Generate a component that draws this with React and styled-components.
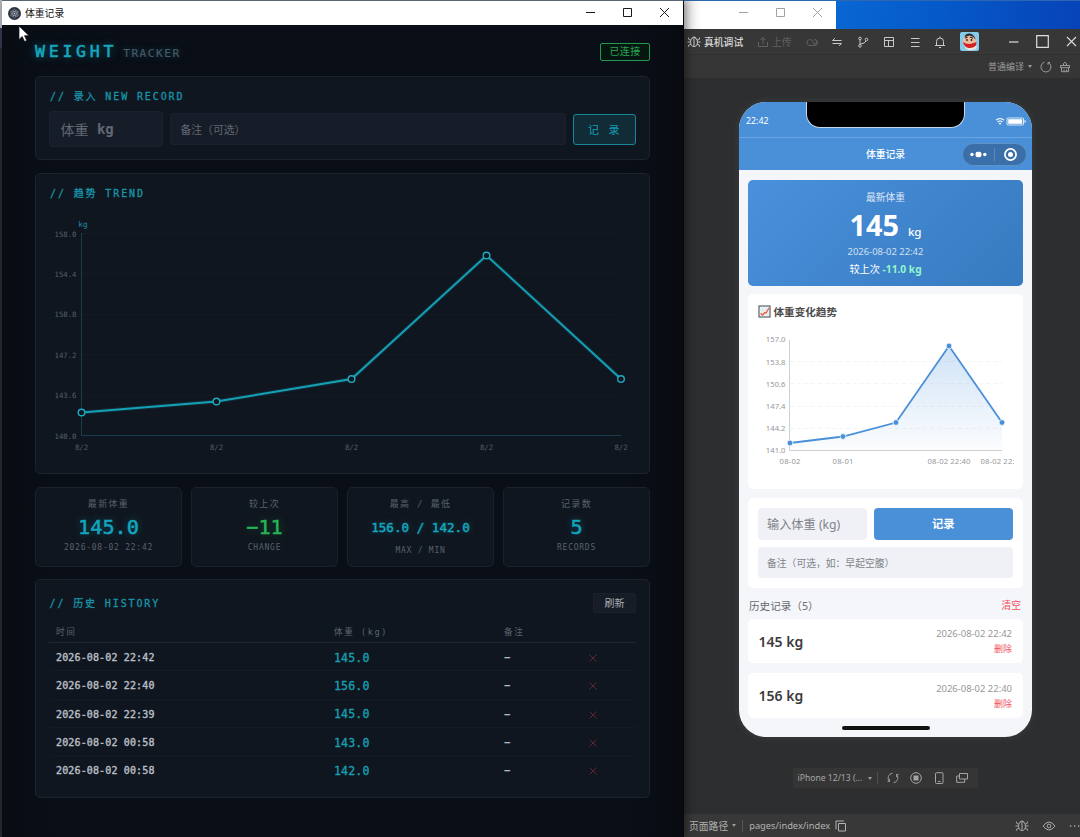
import React from "react";
import styled, { createGlobalStyle, css } from "styled-components";

const mono = `"DejaVu Sans Mono", "Noto Sans CJK SC", monospace`;
const sans = `"Noto Sans", "Noto Sans CJK SC", sans-serif`;

const GlobalStyle = createGlobalStyle`
  * { box-sizing: border-box; }
  body { margin: 0; overflow: hidden; background: #2d2e2f; }
  button, table { font: inherit; }
`;

const Desktop = styled.div`
  display: grid;
  grid-template-columns: 2px 682px 396px;
  width: 1080px;
  height: 837px;
  overflow: hidden;
  font-family: ${sans};
  background: #2d2e2f;
`;

const LeftEdge = styled.div`
  background: linear-gradient(#b9bcc4 0 28px, #39395a 28px 48px, #2a2c30 48px);
`;

/* ---------- tracker window ---------- */

const TrackerWindow = styled.section`
  position: relative;
  z-index: 1;
  display: flex;
  flex-direction: column;
  height: 837px;
  border-top: 1px solid #5d6474;
  border-right: 1px solid #05070b;
  background: linear-gradient(90deg, #080d14, #0a0e16 8%, #0a0e16 92%, #080b12);
  box-shadow: 2px 0 9px rgba(0, 0, 0, 0.45);
  font-family: ${mono};
`;

const TitleBar = styled.header`
  display: flex;
  align-items: center;
  height: 24px;
  flex: none;
  padding-left: 6px;
  background: #fff;
  color: #111;
  font-family: ${sans};
  font-size: 9.8px;
`;

const TitleText = styled.span`
  flex: 1;
  margin-left: 4px;
`;

const WindowButtons = styled.div`
  display: flex;
  width: 111px;
  height: 24px;
  color: ${(p) => (p.$dim ? "#a2a2a2" : "#1a1a1a")};
  svg { flex: 1; height: 24px; }
`;

const Cursor = styled.svg`
  position: absolute;
  left: 16px;
  top: 24px;
`;

const TrackerBody = styled.main`
  display: flex;
  flex-direction: column;
  padding: 0 33px 0 33px;
`;

const BrandRow = styled.div`
  display: flex;
  align-items: center;
  justify-content: space-between;
  height: 51px;
  padding-top: 3px;
`;

const Brand = styled.div`
  display: flex;
  align-items: baseline;
  padding-top: 2px;
  color: #17a5bd;
  font-size: 16.6px;
  letter-spacing: 3.7px;
  line-height: 20px;
  -webkit-text-stroke: 0.6px #17a5bd;
  text-shadow: 0 0 8px rgba(0, 190, 220, 0.55);
`;

const BrandSub = styled.span`
  margin-left: 6px;
  color: #4b5864;
  font-size: 11px;
  letter-spacing: 1.6px;
  -webkit-text-stroke: 0.2px #4b5864;
  text-shadow: 0 0 7px rgba(0, 190, 220, 0.35);
`;

const StatusBadge = styled.div`
  width: 50px;
  height: 18px;
  border: 1px solid #23994e;
  border-radius: 2px;
  background: #04160f;
  color: #27a653;
  font-size: 10px;
  line-height: 16px;
  letter-spacing: 0.4px;
  text-align: center;
`;

const Panel = styled.section`
  height: ${(p) => p.$h}px;
  margin-bottom: 13px;
  padding: 0 13px;
  border: 1px solid #1c232d;
  border-radius: 5px;
  background: #10161f;
`;

const PanelTitle = styled.h2`
  margin: 0;
  color: #1794a8;
  font-size: 10px;
  font-weight: 400;
  letter-spacing: 1.88px;
  line-height: 14px;
  padding: ${(p) => p.$top || 0}px 0 0 ${(p) => (p.$top ? 1 : 0.5)}px;
  -webkit-text-stroke: 0.3px #1794a8;
`;

const EntryRow = styled.div`
  display: flex;
  align-items: center;
  gap: 7px;
  height: 36px;
  margin-top: 7px;
`;

const Field = styled.div`
  display: flex;
  align-items: center;
  width: ${(p) => (p.$wide ? "auto" : "114px")};
  flex: ${(p) => (p.$wide ? 1 : "none")};
  height: ${(p) => (p.$wide ? 32 : 36)}px;
  padding: 0 0 0 ${(p) => (p.$wide ? 9.5 : 10.5)}px;
  border: 1px solid #1b212d;
  border-radius: 3px;
  background: #171d28;
  color: #616873;
  font-size: ${(p) => (p.$wide ? 10.8 : 14)}px;
  white-space: pre;
  b { font-weight: 700; }
`;

const RecordButton = styled.button`
  width: 63px;
  height: 31px;
  padding: 0;
  border: 1px solid #178799;
  border-radius: 3px;
  background: #112c37;
  color: #139db2;
  font-size: 11px;
  letter-spacing: 1.4px;
`;

const TrendSvg = styled.svg`
  display: block;
  margin: 4.5px 0 0 0;
  font-family: ${mono};
`;

const StatGrid = styled.div`
  display: grid;
  grid-template-columns: repeat(4, 1fr);
  gap: 9px;
  margin-bottom: 12px;
`;

const StatCard = styled.div`
  display: flex;
  flex-direction: column;
  align-items: center;
  height: 80px;
  padding-top: 10px;
  border: 1px solid #1a212b;
  border-radius: 5px;
  background: #10161f;
  white-space: pre;
`;

const StatLabel = styled.div`
  color: #59616c;
  font-size: 9px;
  letter-spacing: 1.35px;
  line-height: 13px;
`;

const StatValue = styled.div`
  color: ${(p) => (p.$green ? "#27b457" : "#14a5be")};
  font-size: ${(p) => (p.$small ? 12.6 : 20.2)}px;
  line-height: ${(p) => (p.$small ? 30 : 27)}px;
  margin-top: ${(p) => (p.$small ? 2 : 3)}px;
  -webkit-text-stroke: 0.5px currentColor;
  text-shadow: 0 0 8px ${(p) => (p.$green ? "rgba(30,190,80,.4)" : "rgba(0,190,220,.4)")};
`;

const StatHint = styled.div`
  color: #58616c;
  font-size: 8px;
  letter-spacing: 0.75px;
  line-height: 12px;
  padding-top: ${(p) => (p.$low ? 2 : 1)}px;
`;

const HistoryHead = styled.div`
  display: flex;
  align-items: center;
  justify-content: space-between;
  height: 20px;
  margin-top: 13px;
  ${PanelTitle} { padding-top: 1px; }
`;

const RefreshButton = styled.button`
  width: 43px;
  height: 20px;
  padding: 0 0 2px;
  border: 1px solid #1b212c;
  border-radius: 2px;
  background: #171c26;
  color: #a9aeb6;
  font-size: 10px;
`;

const HistoryRow = styled.div`
  display: grid;
  grid-template-columns: 278px 170px 84px 1fr;
  align-items: center;
  height: 28.3px;
  padding: 2px 0 0 7px;
  border-bottom: 1px solid #151b24;
  color: #b8bdc4;
  font-size: 10px;
  letter-spacing: 0.14px;
  svg { margin-top: -1px; }
  &:last-child { border-bottom-color: transparent; }
  ${(p) =>
    p.$head &&
    css`
      height: 20px;
      margin-top: 10px;
      padding: 0 0 3px 7px;
      border-bottom-color: #1f2731;
      color: #5b646f;
      font-size: 8.6px;
      letter-spacing: 1.55px;
    `}
`;

const DateCell = styled.span`
  -webkit-text-stroke: 0.4px currentColor;
`;

const WeightCell = styled.span`
  color: #16a0b4;
  font-size: 11.6px;
  -webkit-text-stroke: 0.3px currentColor;
`;

/* ---------- developer tools side ---------- */

const RightSide = styled.div`
  display: flex;
  flex-direction: column;
  height: 837px;
  min-width: 0;
`;

const Wallpaper = styled.div`
  display: flex;
  height: 29px;
  flex: none;
  border-top: 1px solid #2d67ad;
  background: linear-gradient(100deg, #0a6bd6 30%, #0559c9 65%, #0743b8);
`;

const BackWindow = styled.div`
  display: flex;
  justify-content: flex-end;
  width: 152px;
  background: linear-gradient(90deg, #e4e4e4, #fff 12%);
`;

const DevTools = styled.section`
  display: flex;
  flex-direction: column;
  flex: 1;
  background: #2d2e2f;
`;

const ToolBar = styled.div`
  display: grid;
  grid-template-columns: 20px 51px 15px 30px 24px 26px 26px 26px 25px 26px 32px 14px 29px 29px 29px;
  align-items: center;
  height: 26px;
  border-bottom: 1px solid #313131;
  background: #373737;
  color: #c9c9c9;
  font-size: 9.8px;
  white-space: nowrap;
  > svg { justify-self: center; }
`;

const ToolText = styled.span`
  color: ${(p) => (p.$dim ? "#626262" : "#dadada")};
  font-weight: ${(p) => (p.$dim ? 400 : 500)};
  ${(p) => p.$dim && "padding-left: 2px;"}
`;

const CompileBar = styled.div`
  display: flex;
  align-items: center;
  justify-content: flex-end;
  height: 23px;
  padding-right: 9px;
  background: #363636;
  color: #9c9c9c;
  font-size: 9px;
  svg { margin-left: 7.5px; }
`;

const Caret = styled.i`
  display: inline-block;
  margin-left: 4px;
  border: 2px solid transparent;
  border-top: 3px solid #999;
  border-bottom: 0;
`;

const Simulator = styled.div`
  display: flex;
  flex-direction: column;
  align-items: center;
  flex: 1;
  padding-top: 24px;
`;

const Phone = styled.div`
  position: relative;
  width: 293px;
  height: 635px;
  margin-left: 7px;
  flex: none;
  overflow: hidden;
  border-radius: 27px;
  background: #f4f6fa;
  color: #444;
  box-shadow: 0 0 8px rgba(255, 255, 255, 0.08);
`;

const PhoneStatus = styled.div`
  display: flex;
  justify-content: space-between;
  height: 36px;
  padding: 12px 6px 0 7px;
  background: #4990d9;
  border-bottom: 1px solid #68a5e2;
  color: #fff;
  font-size: 8.8px;
  line-height: 14px;
`;

const Notch = styled.div`
  position: absolute;
  left: 67px;
  top: -1px;
  width: 159px;
  height: 27px;
  border: 1px solid #c6d8ec;
  border-radius: 0 0 14px 14px;
  background: #000;
  border-top: 0;
`;

const NavBar = styled.div`
  display: grid;
  grid-template-columns: 70px 1fr 70px;
  align-items: center;
  height: 32px;
  background: #4990d9;
  color: #fff;
  font-size: 9.8px;
  font-weight: 500;
  text-align: center;
`;

const Capsule = styled.div`
  display: flex;
  width: 65px;
  height: 23px;
  margin-left: -0.5px;
  border: 1px solid #5e92c8;
  border-radius: 12px;
  background: #3b6fa9;
`;

const PhonePage = styled.div`
  display: flex;
  flex-direction: column;
  padding: 10px 9px 0;
`;

const Hero = styled.div`
  display: flex;
  flex-direction: column;
  align-items: center;
  height: 106px;
  margin-bottom: 8px;
  padding-top: 11px;
  border-radius: 5px;
  background: linear-gradient(135deg, #4a90dc, #367bbf);
  color: #fff;
`;

const HeroLine = styled.div`
  font-size: ${(p) => p.$size}px;
  line-height: ${(p) => p.$lh}px;
  opacity: ${(p) => p.$fade || 1};
  b { color: #92f6cb; }
`;

const HeroValue = styled.div`
  display: flex;
  align-items: baseline;
  margin-top: 4px;
  height: 31px;
  font-size: 28.8px;
  font-weight: 700;
  line-height: 32px;
  span { margin-left: 9px; font-size: 11.6px; font-weight: 500; }
`;

const WhiteCard = styled.div`
  height: ${(p) => p.$h}px;
  margin-bottom: ${(p) => p.$mb || 9}px;
  padding: 10px;
  border-radius: 5px;
  background: #fff;
`;

const ChartTitle = styled.div`
  display: flex;
  align-items: center;
  gap: 3px;
  height: 15px;
  margin-left: -0.5px;
  font-size: 10.6px;
  font-weight: 700;
  color: #4c4c4c;
`;

const PhoneSvg = styled.svg`
  display: block;
  margin-top: 11px;
  font-family: ${sans};
`;

const FormGrid = styled.div`
  display: grid;
  grid-template-columns: 109px 138.5px;
  grid-template-rows: 32px 31px;
  gap: 7px;
`;

const PhoneField = styled.div`
  display: flex;
  align-items: center;
  padding-left: 9px;
  border-radius: 4px;
  background: #f0f1f6;
  color: #808388;
  font-size: ${(p) => (p.$full ? 9.8 : 12.2)}px;
  ${(p) => p.$full && "grid-column: 1 / 3;"}
`;

const PhoneButton = styled.button`
  padding: 0 0 3px;
  border: 0;
  border-radius: 4px;
  background: #4990d9;
  color: #fff;
  font-size: 11.3px;
  font-weight: 700;
`;

const ListHead = styled.div`
  display: flex;
  align-items: center;
  justify-content: space-between;
  height: 22px;
  margin: -3px 0 3px;
  padding: 0 2px 0 1px;
  font-size: 10.6px;
  color: #66696e;
`;

const Danger = styled.span`
  color: #f0525b;
  font-size: ${(p) => p.$size || 9}px;
`;

const RecordItem = styled(WhiteCard)`
  display: flex;
  align-items: center;
  justify-content: space-between;
  padding: 0 11px 0 10.5px;
  strong { font-size: 14px; font-weight: 600; color: #3b3b3b; }
`;

const RecordMeta = styled.div`
  display: flex;
  flex-direction: column;
  align-items: flex-end;
  color: #94979b;
  font-size: 9.45px;
  line-height: 15px;
`;

const HomeBar = styled.div`
  position: absolute;
  left: 103px;
  bottom: 7px;
  width: 88px;
  height: 4px;
  border-radius: 2px;
  background: #111;
`;

const DeviceBar = styled.div`
  display: grid;
  grid-template-columns: 69px 11px 31px 15px 30px 17px;
  align-items: center;
  width: 185px;
  height: 20px;
  margin: 31px 0 0 6px;
  padding-left: 5px;
  background: #353535;
  color: #a5a5a5;
  font-size: 8.6px;
  white-space: nowrap;
  svg { justify-self: center; }
`;

const CaretCell = styled.span`
  display: flex;
  align-items: center;
  height: 12px;
  border-right: 1px solid #505050;
  i { margin-left: 1px; }
`;

const FooterBar = styled.footer`
  display: flex;
  align-items: center;
  height: 23px;
  padding: 0 0 0 5px;
  background: #383838;
  color: #b3b3b3;
  font-size: 9.8px;
  white-space: nowrap;
`;

const FooterPath = styled.span`
  margin-left: 6px;
  padding-left: 6px;
  border-left: 1px solid #555;
  font-size: 9.3px;
  line-height: 12px;
  margin-right: 5px;
`;

const Spacer = styled.span`flex: 1;`;

const FooterIcons = styled.div`
  display: flex;
  align-items: center;
  gap: 13px;
`;

/* ---------- drawings ---------- */

const Line = ({ size = 12, children, w = 1, color = "currentColor", width }) => (
  <svg width={width || size} height={size} viewBox={`0 0 ${width || size} ${size}`} fill="none" stroke={color} strokeWidth={w}>
    {children}
  </svg>
);

const WinIcons = ({ dim }) => (
  <WindowButtons $dim={dim}>
    <svg viewBox="0 0 37 24" fill="none" stroke="currentColor"><path d="M14 11.5h9" /></svg>
    <svg viewBox="0 0 37 24" fill="none" stroke="currentColor"><path d="M14.5 7.5h8v8h-8z" /></svg>
    <svg viewBox="0 0 37 24" fill="none" stroke="currentColor"><path d="M14 7l9 9M23 7l-9 9" /></svg>
  </WindowButtons>
);

const AppLogo = () => (
  <svg width="13" height="13" viewBox="0 0 13 13" fill="none">
    <circle cx="6.5" cy="6.5" r="6.5" fill="#2d3340" />
    <g stroke="#a5b0bc" strokeWidth=".55">
      <ellipse cx="6.5" cy="6.5" rx="4.3" ry="1.7" transform="rotate(30 6.5 6.5)" />
      <ellipse cx="6.5" cy="6.5" rx="4.3" ry="1.7" transform="rotate(90 6.5 6.5)" />
      <ellipse cx="6.5" cy="6.5" rx="4.3" ry="1.7" transform="rotate(150 6.5 6.5)" />
    </g>
    <circle cx="6.5" cy="6.5" r=".7" fill="#cdd5dc" />
  </svg>
);

const BugIcon = ({ color }) => (
  <Line size={13} width={14} color={color}>
    <ellipse cx="7" cy="7.2" rx="3.4" ry="4.3" />
    <path d="M4.600 3.300Q7 .300 9.400 3.300M7 4v7.500M3.600 7H.500M13.500 7h-3.100M3.800 5.300L1.600 4.200V2.600M10.200 5.300l2.200-1.100V2.600M4 9.200l-2.400 1V11.800M10 9.200l2.400 1V11.800" />
  </Line>
);

const RotateIcon = () => (
  <Line color="#999">
    <path d="M5.500 1.200A4.900 4.900 0 0 0 2.500 9.500M2.500 9.500V7M2.500 9.500H.500M6.500 10.800A4.900 4.900 0 0 0 9.500 2.500M9.500 2.500V5M9.500 2.500h2" />
  </Line>
);

const Avatar = () => (
  <svg width="19" height="19" viewBox="0 0 19 19">
    <rect width="19" height="19" rx="2" fill="#86cbea" />
    <path d="M4 13c1-1 11-1 13 1l-1 3q-6 2.500-10 0z" fill="#e8e5df" />
    <path d="M3.500 7Q4 3 9 3q6 0 7 6c.6 4-4 5-8 4.500Q3 13 2.600 10z" fill="#edbb9b" />
    <path d="M4.500 5Q5 1.500 9.500 1.500q5 .5 6 6.500L13.500 5 10 3.500z" fill="#302a2b" />
    <path d="M5 6l2.500-.8M10 5l3 1.200" stroke="#292324" strokeWidth="1.200" />
    <circle cx="7" cy="8" r=".9" fill="#292324" /><circle cx="11.500" cy="8" r=".9" fill="#292324" />
    <path d="M3 10q4 3 9 1.500l4.500-1.500-.5 3.500q-3 3-7.500 2.500-4.500-1-5.500-6z" fill="#d52125" />
  </svg>
);

const CursorArrow = () => (
  <Cursor width="12" height="18" viewBox="0 0 12 18">
    <path d="M1 1v13.500l3.200-3 2.400 5 2.200-1-2.300-4.800H11z" fill="#fff" stroke="#111" strokeWidth=".7" />
  </Cursor>
);

/* ---------- charts ---------- */

const trendPoints = [[32.5, 206.5], [167.5, 195.5], [302.5, 173], [437.5, 49.5], [572, 173]];
const trendTicks = ["158.0", "154.4", "150.8", "147.2", "143.6", "140.0"];

const TrendChart = () => (
  <TrendSvg width="587" height="260" viewBox="0 0 587 260">
    <g fill="#55606b" fontSize="7.300" textAnchor="end">
      {trendTicks.map((t, i) => <text key={t} x="27.500" y={30.5 + i * 40.4}>{t}</text>)}
    </g>
    <text x="34" y="20.500" fill="#168fa3" fontSize="7.800" textAnchor="middle">kg</text>
    <g stroke="#141922">
      {[0, 1, 2, 3, 4].map((i) => <path key={i} d={`M33 ${27.5 + Math.round(i * 40.4)}H572`} />)}
    </g>
    <path d="M32.500 27v202.500H572" fill="none" stroke="#163e4b" />
    <polyline points={trendPoints.join(" ")} fill="none" stroke="#0d4350" strokeWidth="4" opacity=".5" />
    <polyline points={trendPoints.join(" ")} fill="none" stroke="#16a0b7" strokeWidth="1.900" />
    {trendPoints.map(([x, y]) => (
      <g key={x}>
        <circle cx={x} cy={y} r="3.300" fill="#10161f" stroke="#1eabc2" strokeWidth="1.400" />
        <text x={x} y="243.800" fill="#55606b" fontSize="7.300" textAnchor="middle">8/2</text>
      </g>
    ))}
  </TrendSvg>
);

const phonePoints = [[32, 113], [85, 106.5], [138, 92.5], [191, 16], [244, 92.5]];
const phoneTicks = ["157.0", "153.8", "150.6", "147.4", "144.2", "141.0"];
const phoneDates = [[32, "08-02"], [85, "08-01"], [191, "08-02 22:40"]];

const PhoneChart = () => (
  <PhoneSvg width="256" height="150" viewBox="0 0 256 150">
    <defs>
      <linearGradient id="area" x1="0" y1="0" x2="0" y2="1">
        <stop offset="0" stopColor="#4990d9" stopOpacity=".26" />
        <stop offset="1" stopColor="#4990d9" stopOpacity=".02" />
      </linearGradient>
    </defs>
    <g stroke="#f4f5f6" strokeDasharray="4 3">
      {[1, 2, 3, 4].map((i) => <path key={i} d={`M32 ${9.5 + Math.round(i * 22.2)}H244`} />)}
    </g>
    <path d="M31.500 10v110.500H244" fill="none" stroke="#cfd0d2" />
    <polygon points={`32,120 ${phonePoints.join(" ")} 244,120`} fill="url(#area)" />
    <polyline points={phonePoints.join(" ")} fill="none" stroke="#4990d9" strokeWidth="1.800" />
    {phonePoints.map(([x, y]) => <circle key={x} cx={x} cy={y} r="2.900" fill="#4990d9" stroke="#fff" strokeWidth=".8" />)}
    <g fill="#96989b" fontSize="7.700">
      {phoneTicks.map((t, i) => <text key={t} x="27.500" y={12.3 + i * 22.2} textAnchor="end">{t}</text>)}
    </g>
    <g fill="#96989b" fontSize="7.700" textAnchor="middle">
      {phoneDates.map(([x, t]) => <text key={x} x={x} y="134" textLength={t.length > 5 ? 43 : 21}>{t}</text>)}
      <text x="222.500" y="134" textAnchor="start" textLength="34">08-02 22:</text>
    </g>
  </PhoneSvg>
);

const TrendEmoji = () => (
  <svg width="13" height="13" viewBox="0 0 13 13" fill="none">
    <rect x="1" y="1" width="11" height="11" fill="#eef2f4" stroke="#5c6266" strokeWidth="1.200" />
    <path d="M4.500 1.500v10M8 1.500v10M1.500 5h10M1.500 8.500h10" stroke="#d5dde2" strokeWidth=".6" />
    <path d="M2.500 8.500l2.200 1.500 2-2.500 1.300.5L11 3" stroke="#e8603f" strokeWidth="1.300" />
  </svg>
);

/* ---------- data ---------- */

const stats = [
  { label: "最新体重", value: "145.0", hint: "2026-08-02 22:42" },
  { label: "较上次", value: "−11", hint: "CHANGE", green: true },
  { label: "最高 / 最低", value: "156.0 / 142.0", hint: "MAX / MIN", small: true },
  { label: "记录数", value: "5", hint: "RECORDS" },
];

const history = [
  ["2026-08-02 22:42", "145.0"],
  ["2026-08-02 22:40", "156.0"],
  ["2026-08-02 22:39", "145.0"],
  ["2026-08-02 00:58", "143.0"],
  ["2026-08-02 00:58", "142.0"],
];

const Tracker = () => (
  <TrackerWindow>
    <TitleBar>
      <AppLogo />
      <TitleText>体重记录</TitleText>
      <WinIcons />
    </TitleBar>
    <CursorArrow />
    <TrackerBody>
      <BrandRow>
        <Brand>WEIGHT<BrandSub>TRACKER</BrandSub></Brand>
        <StatusBadge>已连接</StatusBadge>
      </BrandRow>
      <Panel $h={84}>
        <PanelTitle $top={13}>// 录入 NEW RECORD</PanelTitle>
        <EntryRow>
          <Field>体重 <b>kg</b></Field>
          <Field $wide>备注（可选）</Field>
          <RecordButton>记 录</RecordButton>
        </EntryRow>
      </Panel>
      <Panel $h={301}>
        <PanelTitle $top={13}>// 趋势 TREND</PanelTitle>
        <TrendChart />
      </Panel>
      <StatGrid>
        {stats.map((s) => (
          <StatCard key={s.label}>
            <StatLabel>{s.label}</StatLabel>
            <StatValue $green={s.green} $small={s.small}>{s.value}</StatValue>
            <StatHint $low={s.small}>{s.hint}</StatHint>
          </StatCard>
        ))}
      </StatGrid>
      <Panel $h={219}>
        <HistoryHead>
          <PanelTitle>// 历史 HISTORY</PanelTitle>
          <RefreshButton>刷新</RefreshButton>
        </HistoryHead>
        <HistoryRow $head><span>时间</span><span>体重 (kg)</span><span>备注</span></HistoryRow>
        {history.map(([date, weight], i) => (
          <HistoryRow key={i}>
            <DateCell>{date}</DateCell>
            <WeightCell>{weight}</WeightCell>
            <DateCell>−</DateCell>
            <Line size={10} w={0.9} color="#6e2835"><path d="M1.500 2.500l7 7M8.500 2.500l-7 7" /></Line>
          </HistoryRow>
        ))}
      </Panel>
    </TrackerBody>
  </TrackerWindow>
);

const PhoneScreen = () => (
  <Phone>
    <PhoneStatus>
      <span>22:42</span>
      <svg width="31" height="14" viewBox="0 0 31 14" fill="none" stroke="#fff">
        <path d="M1 6.200q4-3.400 8 0M2.600 8q2.400-2 4.800 0" strokeWidth="1.100" />
        <circle cx="5" cy="9.600" r=".6" fill="#fff" />
        <rect x="12" y="4" width="16.500" height="7" rx="1" strokeWidth=".8" />
        <rect x="13.200" y="5.200" width="14" height="4.600" fill="#fff" stroke="none" />
        <path d="M30 6.200v2.600" />
      </svg>
    </PhoneStatus>
    <Notch />
    <NavBar>
      <span />
      <span>体重记录</span>
      <Capsule>
        <svg width="63" height="21" viewBox="0 0 63 21" fill="#fff">
          <circle cx="9" cy="10.500" r="1.700" /><rect x="12.500" y="7.800" width="6" height="5.400" rx="2.300" /><circle cx="21.800" cy="10.500" r="1.700" />
          <path d="M31.500 4v13" stroke="#5b89ba" />
          <circle cx="47.500" cy="10.500" r="5.600" fill="none" stroke="#fff" strokeWidth="1.700" /><circle cx="47.500" cy="10.500" r="2.500" />
        </svg>
      </Capsule>
    </NavBar>
    <PhonePage>
      <Hero>
        <HeroLine $size={9.8} $lh={14} $fade={0.8}>最新体重</HeroLine>
        <HeroValue>145<span>kg</span></HeroValue>
        <HeroLine $size={9.45} $lh={24} $fade={0.75}>2026-08-02 22:42</HeroLine>
        <HeroLine $size={10.2} $lh={11}>较上次 <b>-11.0 kg</b></HeroLine>
      </Hero>
      <WhiteCard $h={195}>
        <ChartTitle><TrendEmoji />体重变化趋势</ChartTitle>
        <PhoneChart />
      </WhiteCard>
      <WhiteCard $h={90}>
        <FormGrid>
          <PhoneField>输入体重 (kg)</PhoneField>
          <PhoneButton>记录</PhoneButton>
          <PhoneField $full>备注（可选，如：早起空腹）</PhoneField>
        </FormGrid>
      </WhiteCard>
      <ListHead><span>历史记录（5）</span><Danger $size={9.8}>清空</Danger></ListHead>
      <RecordItem $h={44} $mb={10}>
        <strong>145 kg</strong>
        <RecordMeta>2026-08-02 22:42<Danger>删除</Danger></RecordMeta>
      </RecordItem>
      <RecordItem $h={45}>
        <strong>156 kg</strong>
        <RecordMeta>2026-08-02 22:40<Danger>删除</Danger></RecordMeta>
      </RecordItem>
    </PhonePage>
    <HomeBar />
  </Phone>
);

export default function App() {
  return (
    <>
      <GlobalStyle />
      <Desktop>
        <LeftEdge />
        <Tracker />
        <RightSide>
          <Wallpaper>
            <BackWindow><WinIcons dim /></BackWindow>
          </Wallpaper>
          <DevTools>
            <ToolBar>
              <BugIcon />
              <ToolText>真机调试</ToolText>
              <Line color="#626262"><path d="M1.500 6v4.500h9V6M6 8V1.500M3.500 4L6 1.500 8.500 4" /></Line>
              <ToolText $dim>上传</ToolText>
              <Line color="#626262" width={13}><path d="M4 9.500a3 3 0 1 1 2.800-4L8 8a2.200 2.200 0 1 0 0-4.200M4 9.500h5a3 3 0 0 0 .5-5.800" /></Line>
              <Line><path d="M10.500 4.500H1.500L4 2.200M1.500 7.500h9L8 9.800" /></Line>
              <Line><circle cx="3" cy="2.500" r="1.300" /><circle cx="3" cy="9.800" r="1.300" /><circle cx="9.500" cy="3.500" r="1.300" /><path d="M3 4v4.500M9 5Q8 7.500 3.500 8" /></Line>
              <Line><path d="M1.500 1.500h9v9h-9zM1.500 4.500h9M5.500 4.500v6" /></Line>
              <Line><path d="M2 2.500h8.500M2 6.500h8.500M2 10.500h8.500" /></Line>
              <Line><path d="M2.500 9V5.500a3.500 3.500 0 0 1 7 0V9M1 9.500h10M5 11.500h2M6 .5v1.500" /></Line>
              <Avatar />
              <span />
              <Line color="#ddd" w={1.2}><path d="M1 6h9.500" /></Line>
              <Line size={13} color="#ddd" w={1.2}><path d="M.700.700h11.600v11.600H.700z" /></Line>
              <Line size={11} color="#ddd" w={1.1}><path d="M1 1l9 9M10 1l-9 9" /></Line>
            </ToolBar>
            <CompileBar>
              普通编译<Caret />
              <Line><path d="M4.500 1.200A5 5 0 1 0 8 1.400M8 1.400V3.600M8 1.400h2" /></Line>
              <Line><path d="M1.500 4.500h9v2.200h-9zM2.500 6.700v4h7v-4M4.500 4.500V2.500q1.500-2.500 3 0v2M5 10.500V8.500M7.500 10.500V8.500" /></Line>
            </CompileBar>
            <Simulator>
              <PhoneScreen />
              <DeviceBar>
                <span>iPhone 12/13 (...</span>
                <CaretCell><span /><Caret /></CaretCell>
                <RotateIcon />
                <Line><circle cx="6" cy="6" r="5.300" /><rect x="4" y="4" width="4" height="4" fill="currentColor" /></Line>
                <Line><rect x="2.500" y=".7" width="7.500" height="10.800" rx="1" /><path d="M5 9.500h2.500" /></Line>
                <Line><path d="M3.500 1.500h8v5.500h-8zM3.500 4H.700v6.300h8V7" /></Line>
              </DeviceBar>
            </Simulator>
            <FooterBar>
              <span>页面路径</span><Caret />
              <FooterPath>pages/index/index</FooterPath>
              <Line><path d="M3.500 3.500h7v7.500H3.500zM1 9.500V1h8" /></Line>
              <Spacer />
              <FooterIcons>
                <BugIcon color="#a8a8a8" />
                <Line size={12} width={14} color="#a8a8a8"><path d="M1 6q6-8 12 0-6 8-12 0z" /><circle cx="7" cy="6" r="1.900" /></Line>
                <Line size={12} width={11} color="#a8a8a8" w={1.3}><path d="M1 6h1.300M5 6h1.300M9 6h1.300" /></Line>
              </FooterIcons>
            </FooterBar>
          </DevTools>
        </RightSide>
      </Desktop>
    </>
  );
}
